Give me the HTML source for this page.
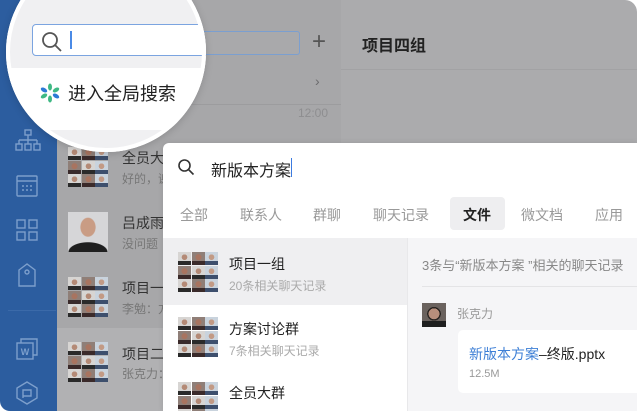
<!DOCTYPE html>
<html><head><meta charset="utf-8"><style>
*{margin:0;padding:0;box-sizing:border-box}
html,body{width:637px;height:411px;overflow:hidden}
body{background:#fff;font-family:"Liberation Sans","Noto Sans CJK SC",sans-serif;position:relative}
.abs{position:absolute}
.side{left:0;top:0;width:57px;height:411px;background:#2c5d9f;border-bottom-left-radius:10px}
.mid{left:57px;top:0;width:284px;height:411px;background:#a7a7a9}
.right{left:341px;top:0;width:296px;height:411px;background:#ababad;border-top-right-radius:12px}
.g{position:absolute;width:40px;height:40px;display:grid;grid-template-columns:repeat(3,13px);grid-template-rows:repeat(3,13px);gap:0.5px}
.g span{background:radial-gradient(circle at 50% 40%,#b48a76 0 26%,transparent 29%),linear-gradient(to top,#2a2a2a 0 30%,#d7d5d3 30%)}
.g span:nth-child(2n){background:radial-gradient(circle at 50% 40%,#a87460 0 28%,transparent 31%),linear-gradient(to top,#3a2a2a 0 32%,#8f7f78 32%)}
.g span:nth-child(3n){background:radial-gradient(circle at 50% 40%,#c29a85 0 26%,transparent 29%),linear-gradient(to top,#3d4f6d 0 30%,#c9d3dd 30%)}
.t{position:absolute;white-space:nowrap}
</style></head><body>
<div class="abs side"></div>
<svg class="abs" style="left:14px;top:128px" width="28" height="26" viewBox="0 0 28 26" fill="none" stroke="#7d9fcc" stroke-width="1.4"><rect x="11" y="2" width="6" height="5"/><path d="M14 7v5M5 12h18M5 12v4M14 12v4M23 12v4"/><rect x="2" y="16" width="6" height="6"/><rect x="11" y="16" width="6" height="6"/><rect x="20" y="16" width="6" height="6"/></svg>
<svg class="abs" style="left:15px;top:174px" width="24" height="24" viewBox="0 0 24 24" fill="none" stroke="#7d9fcc" stroke-width="1.4"><rect x="2" y="2" width="20" height="20" rx="1"/><path d="M2 7h20"/><g fill="#7d9fcc" stroke="none"><circle cx="8" cy="12" r="1"/><circle cx="12" cy="12" r="1"/><circle cx="16" cy="12" r="1"/><circle cx="8" cy="16" r="1"/><circle cx="12" cy="16" r="1"/><circle cx="16" cy="16" r="1"/></g></svg>
<svg class="abs" style="left:15px;top:218px" width="24" height="24" viewBox="0 0 24 24" fill="none" stroke="#7d9fcc" stroke-width="1.4"><rect x="2" y="2" width="8" height="8"/><rect x="14" y="2" width="8" height="8"/><rect x="2" y="14" width="8" height="8"/><rect x="14" y="14" width="8" height="8"/></svg>
<svg class="abs" style="left:17px;top:262px" width="20" height="26" viewBox="0 0 20 26" fill="none" stroke="#7d9fcc" stroke-width="1.4"><path d="M2 8l8-6 8 6v16H2z"/><circle cx="10" cy="10" r="2"/></svg>
<div class="abs" style="left:8px;top:310px;width:48px;height:1px;background:#3b6aa9"></div>
<svg class="abs" style="left:15px;top:337px" width="24" height="24" viewBox="0 0 24 24" fill="none" stroke="#7d9fcc" stroke-width="1.4"><rect x="2" y="6" width="16" height="16"/><path d="M6 6V2h16v16h-4"/><text x="10" y="18" font-size="9" fill="#7d9fcc" stroke="none" text-anchor="middle" font-weight="bold" font-family="Liberation Sans">W</text></svg>
<svg class="abs" style="left:15px;top:380px" width="24" height="26" viewBox="0 0 24 26" fill="none" stroke="#7d9fcc" stroke-width="1.4"><path d="M12 2l10 6v10l-10 6-10-6V8z"/><path d="M8 18V10l8 0v6h-8"/></svg>

<div class="abs mid"></div>
<div class="abs" style="left:57px;top:104px;width:284px;height:1px;background:#9c9c9e"></div>
<div class="abs" style="left:57px;top:328px;width:284px;height:83px;background:#b1b1b3"></div>
<div class="t" style="left:298px;top:106px;font-size:12px;color:#8e8e90">12:00</div>
<div class="t" style="left:315px;top:73px;font-size:14px;color:#6c6c6e">›</div>
<div class="abs" style="left:34px;top:31px;width:266px;height:24px;border:1.5px solid #7b9fd0;border-radius:3px;background:#a9a9ab"></div>
<div class="t" style="left:312px;top:28px;font-size:24px;font-weight:200;color:#555">+</div>

<div class="g" style="left:68px;top:147px"><span></span><span></span><span></span><span></span><span></span><span></span><span></span><span></span><span></span></div>
<div class="t" style="left:122px;top:148px;font-size:14px;color:#333">全员大群</div>
<div class="t" style="left:122px;top:170px;font-size:12px;color:#777">好的，谢谢</div>
<div class="abs" style="left:68px;top:212px;width:40px;height:40px;background:radial-gradient(ellipse 8px 10px at 50% 38%,#c99c84 0 90%,transparent 100%),radial-gradient(ellipse 20px 10px at 50% 100%,#1f1f1f 0 95%,transparent 100%),#d6d6d8"></div>
<div class="t" style="left:122px;top:213px;font-size:14px;color:#333">吕成雨</div>
<div class="t" style="left:122px;top:235px;font-size:12px;color:#777">没问题</div>
<div class="g" style="left:68px;top:277px"><span></span><span></span><span></span><span></span><span></span><span></span><span></span><span></span><span></span></div>
<div class="t" style="left:122px;top:278px;font-size:14px;color:#333">项目一组</div>
<div class="t" style="left:122px;top:300px;font-size:12px;color:#777">李勉：方案</div>
<div class="g" style="left:68px;top:342px"><span></span><span></span><span></span><span></span><span></span><span></span><span></span><span></span><span></span></div>
<div class="t" style="left:122px;top:344px;font-size:14px;color:#333">项目二组</div>
<div class="t" style="left:122px;top:365px;font-size:12px;color:#777">张克力：好</div>

<div class="abs right"></div>
<div class="t" style="left:362px;top:32px;font-size:16px;font-weight:bold;color:#222">项目四组</div>
<div class="abs" style="left:341px;top:69px;width:296px;height:1px;background:#a2a2a4"></div>

<div class="abs" style="left:6px;top:-48px;width:200px;height:200px;border-radius:50%;background:#fff;box-shadow:0 2px 8px rgba(0,0,0,.15);overflow:hidden">
 <div class="abs" style="left:0;top:0;width:200px;height:116px;background:#f0f0f2"></div>
 <div class="abs" style="left:0;top:116px;width:200px;height:62px;background:#fff"></div>
 <div class="abs" style="left:0;top:178px;width:200px;height:30px;background:#f0f0f2"></div>
 <div class="abs" style="left:26px;top:72px;width:190px;height:32px;border:1.5px solid #7ba4e0;border-radius:4px;background:#fff"></div>
 <svg class="abs" style="left:34px;top:78px" width="24" height="24" viewBox="0 0 24 24" fill="none" stroke="#555" stroke-width="1.8"><circle cx="10" cy="10" r="7"/><path d="M15 15l6 6"/></svg>
 <div class="abs" style="left:64px;top:79px;width:2px;height:18px;background:#4a8ae6"></div>
 <svg class="abs" style="left:34px;top:131px" width="20" height="20" viewBox="0 0 20 20"><g fill="#3fb884"><ellipse cx="10" cy="4" rx="2" ry="3.5"/><ellipse cx="10" cy="16" rx="2" ry="3.5"/></g><g fill="#2c79d6"><ellipse cx="4" cy="7" rx="3.5" ry="2" transform="rotate(30 4 7)"/><ellipse cx="16" cy="13" rx="3.5" ry="2" transform="rotate(30 16 13)"/></g><g fill="#3fb884"><ellipse cx="16" cy="7" rx="3.5" ry="2" transform="rotate(-30 16 7)"/><ellipse cx="4" cy="13" rx="3.5" ry="2" transform="rotate(-30 4 13)"/></g></svg>
 <div class="t" style="left:62px;top:128px;font-size:18px;color:#222">进入全局搜索</div>
</div>
<div class="abs" style="left:6px;top:-48px;width:200px;height:200px;border-radius:50%;border:4px solid #fff"></div>

<div class="abs" style="left:163px;top:143px;width:474px;height:268px;background:#fff;border-top-left-radius:6px;box-shadow:0 0 6px rgba(0,0,0,.1)"></div>
<svg class="abs" style="left:177px;top:158px" width="18" height="18" viewBox="0 0 18 18" fill="none" stroke="#333" stroke-width="1.6"><circle cx="7.5" cy="7.5" r="5.5"/><path d="M11.5 11.5l5 5"/></svg>
<div class="t" style="left:211px;top:157px;font-size:16px;color:#222">新版本方案</div>
<div class="abs" style="left:291px;top:158px;width:1px;height:19px;background:#3c7be0"></div>
<div class="abs" style="left:450px;top:197px;width:55px;height:33px;background:#eeeef0;border-radius:4px"></div>
<div class="t" style="left:180px;top:205px;font-size:14px;color:#999">全部</div>
<div class="t" style="left:240px;top:205px;font-size:14px;color:#999">联系人</div>
<div class="t" style="left:313px;top:205px;font-size:14px;color:#999">群聊</div>
<div class="t" style="left:373px;top:205px;font-size:14px;color:#999">聊天记录</div>
<div class="t" style="left:463px;top:205px;font-size:14px;color:#222;font-weight:bold">文件</div>
<div class="t" style="left:521px;top:205px;font-size:14px;color:#999">微文档</div>
<div class="t" style="left:595px;top:205px;font-size:14px;color:#999">应用</div>

<div class="abs" style="left:163px;top:238px;width:244px;height:67px;background:#efeff1"></div>
<div class="abs" style="left:407px;top:238px;width:230px;height:173px;background:#f5f5f7;border-left:1px solid #e8e8ea"></div>
<div class="g" style="left:178px;top:252px"><span></span><span></span><span></span><span></span><span></span><span></span><span></span><span></span><span></span></div>
<div class="t" style="left:229px;top:254px;font-size:14px;color:#222">项目一组</div>
<div class="t" style="left:229px;top:277px;font-size:12px;color:#aaa">20条相关聊天记录</div>
<div class="g" style="left:178px;top:317px"><span></span><span></span><span></span><span></span><span></span><span></span><span></span><span></span><span></span></div>
<div class="t" style="left:229px;top:319px;font-size:14px;color:#222">方案讨论群</div>
<div class="t" style="left:229px;top:342px;font-size:12px;color:#aaa">7条相关聊天记录</div>
<div class="g" style="left:178px;top:382px"><span></span><span></span><span></span><span></span><span></span><span></span><span></span><span></span><span></span></div>
<div class="t" style="left:229px;top:383px;font-size:14px;color:#222">全员大群</div>

<div class="t" style="left:422px;top:255px;font-size:13px;color:#888">3条与“新版本方案 ”相关的聊天记录</div>
<div class="abs" style="left:422px;top:286px;width:215px;height:1px;background:#e4e4e6"></div>
<div class="abs" style="left:422px;top:303px;width:24px;height:24px;background:radial-gradient(circle at 50% 45%,#b88f7c 0 30%,#2a2522 31% 38%,transparent 39%),linear-gradient(to top,#1f1f1f 0 25%,#6a625e 25%)"></div>
<div class="t" style="left:457px;top:305px;font-size:12px;color:#999">张克力</div>
<div class="abs" style="left:458px;top:330px;width:185px;height:63px;background:#fff;border-radius:5px"></div>
<div class="t" style="left:469px;top:344px;font-size:14px;color:#222"><span style="color:#3d7fd6">新版本方案</span>–终版.pptx</div>
<div class="t" style="left:469px;top:368px;font-size:11px;color:#999">12.5M</div>
</body></html>
